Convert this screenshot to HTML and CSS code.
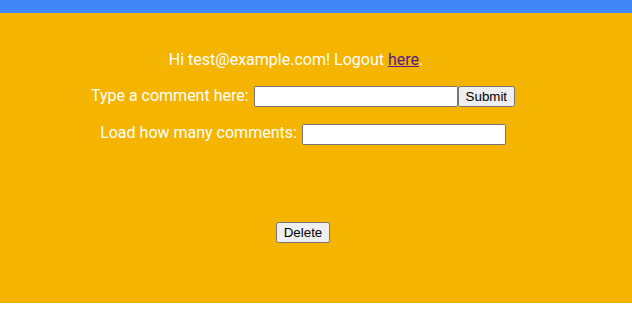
FILE: index.html
```html
<!DOCTYPE html>
<html lang="en">
<head>
    <meta charset="UTF-8">
    <meta name="viewport" content="width=device-width, initial-scale=1.0">
    <title>Comments</title>
    <link rel="stylesheet" href="styles.css">
</head>
<body>
    <div class="topbar"></div>
    <div class="main">
        <p class="greeting">Hi test@example.com! Logout <a href="#">here</a>.</p>
        <form class="row">
            <label for="comment">Type a comment here:</label><input type="text" id="comment"><button type="button">Submit</button>
        </form>
        <div class="row">
            <label for="count">Load how many comments:</label><input type="text" id="count">
        </div>
        <div class="comments"></div>
        <button class="delete" type="button">Delete</button>
    </div>
</body>
</html>
```

FILE: styles.css
```css
body {
    margin: 0;
    padding: 0;
    font-family: Roboto, "Open Sans", sans-serif;
    background-color: #fff;
}
.topbar {
    height: 13px;
    background-color: #4285f4;
}
.main {
    height: 290px;
    background-color: #f4b400;
    color: #fff;
    text-align: center;
    font-size: 16px;
    box-sizing: border-box;
    padding: 37px 26px 0 0;
}
.greeting {
    margin: 0 0 17px 0;
    padding-right: 14px;
}
.greeting a {
    color: #551a8b;
}
.row {
    margin: 0 0 16px 0;
}
.row label {
    margin-right: 5px;
}
input[type="text"] {
    width: 196px;
    height: 15px;
    font-family: Arial, sans-serif;
    font-size: 13px;
    vertical-align: middle;
}
button {
    font-family: Arial, "Liberation Sans", sans-serif;
    font-size: 13.33px;
    vertical-align: middle;
}
.comments {
    height: 61px;
}
```
